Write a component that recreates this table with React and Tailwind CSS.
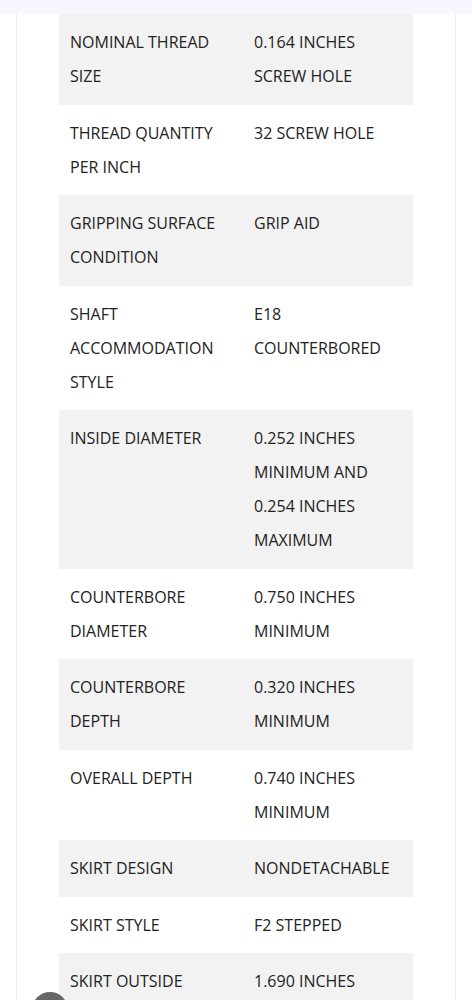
import React from 'react';

const rows = [
  ['NOMINAL THREAD SIZE', '0.164 INCHES SCREW HOLE'],
  ['THREAD QUANTITY PER INCH', '32 SCREW HOLE'],
  ['GRIPPING SURFACE CONDITION', 'GRIP AID'],
  ['SHAFT ACCOMMODATION STYLE', 'E18 COUNTERBORED'],
  ['INSIDE DIAMETER', '0.252 INCHES MINIMUM AND 0.254 INCHES MAXIMUM'],
  ['COUNTERBORE DIAMETER', '0.750 INCHES MINIMUM'],
  ['COUNTERBORE DEPTH', '0.320 INCHES MINIMUM'],
  ['OVERALL DEPTH', '0.740 INCHES MINIMUM'],
  ['SKIRT DESIGN', 'NONDETACHABLE'],
  ['SKIRT STYLE', 'F2 STEPPED'],
  ['SKIRT OUTSIDE DIAMETER', '1.690 INCHES'],
];

const App = () => {
  return (
    <div className="h-[1000px] overflow-hidden bg-white" style={{ fontFamily: '"Open Sans", "Liberation Sans", sans-serif' }}>
      <div className="h-[14px] bg-[#f8f6fc]" />
      <div className="mx-[16px] h-[986px] border-x border-[#ececec] bg-white">
        <table className="ml-[42px] w-[354px] border-collapse text-[16px] leading-[34px] text-[#222]">
          <tbody>
            {rows.map(([label, value], i) => (
              <tr key={label} className={i % 2 === 0 ? 'bg-[#f2f2f2]' : 'bg-white'}>
                <td className="w-[184px] px-[11px] pt-[11px] pb-[11.5px] align-top">{label}</td>
                <td className="px-[11px] pt-[11px] pb-[11.5px] align-top">{value}</td>
              </tr>
            ))}
          </tbody>
        </table>
      </div>
      <div className="fixed left-[32px] top-[992px] h-[36px] w-[36px] rounded-full bg-[#666]" />
    </div>
  );
};

export default App;
